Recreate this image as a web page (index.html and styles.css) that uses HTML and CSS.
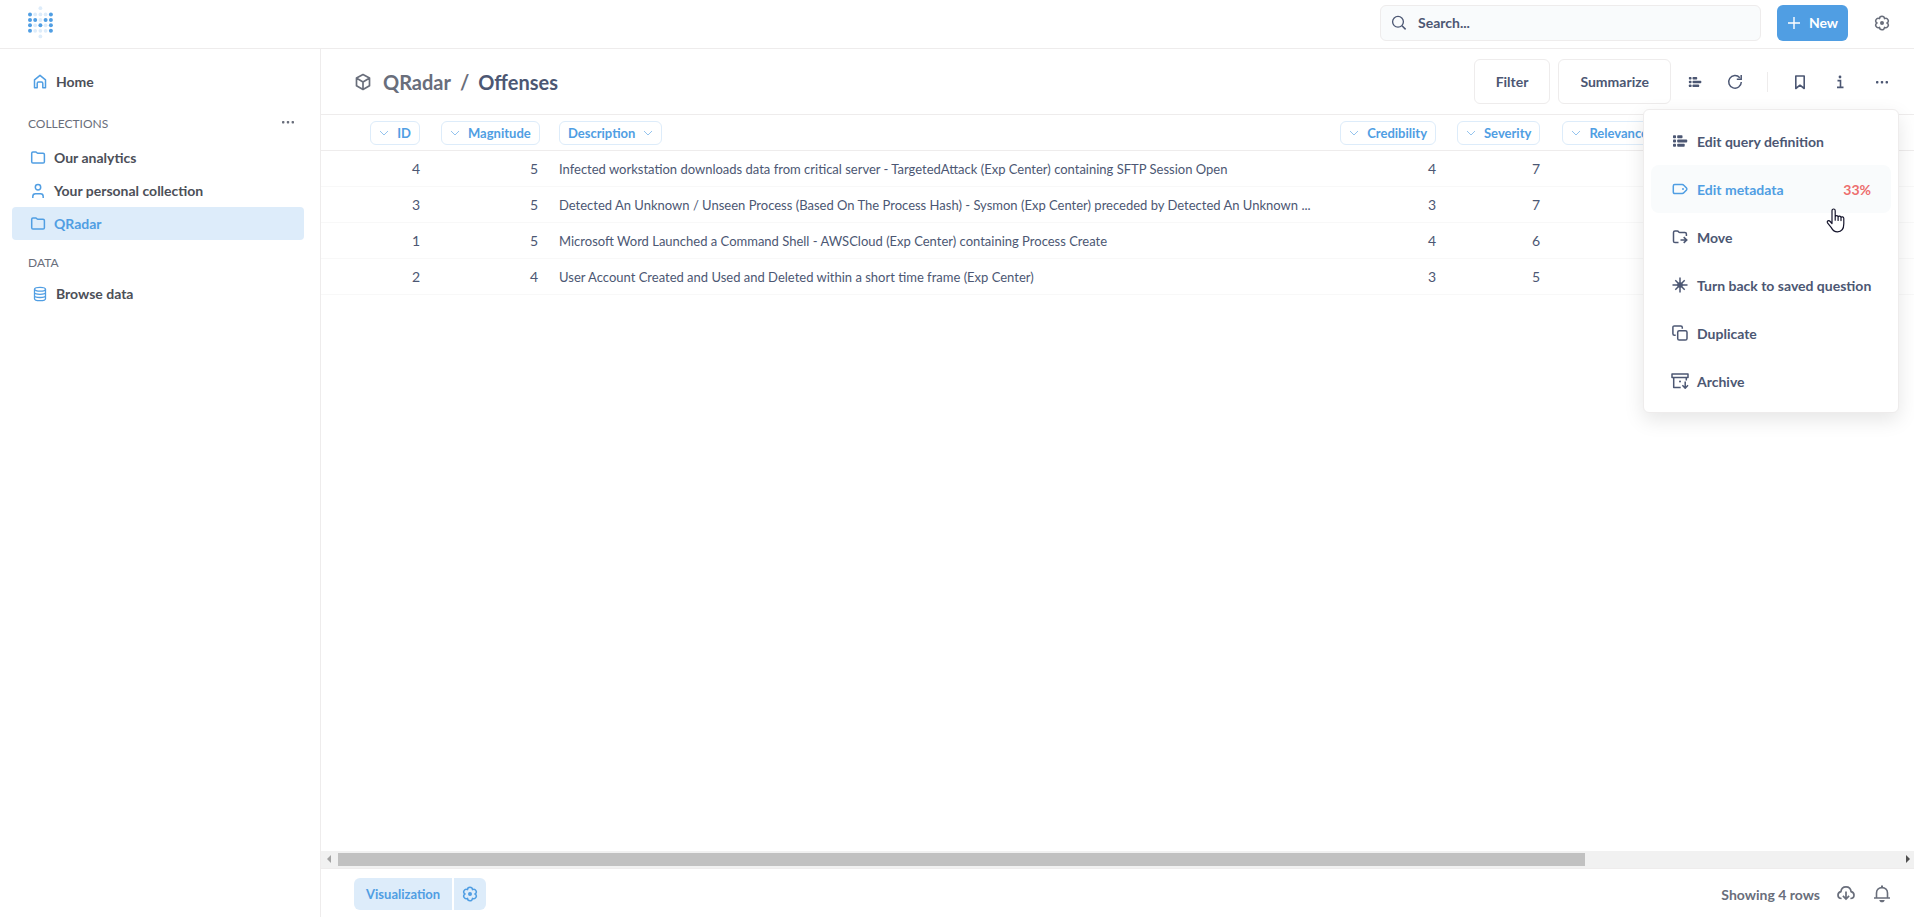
FILE: index.html
```html
<!DOCTYPE html>
<html lang="en">
<head>
<meta charset="utf-8">
<title>Offenses · Metabase</title>
<link rel="stylesheet" href="styles.css">
</head>
<body>
<svg class="sprite" aria-hidden="true">
  <symbol id="gear" viewBox="0 0 16 16"><path d="M13 8A2.500 2.500 0 0 1 10.500 12.330A2.500 2.500 0 0 1 5.500 12.330A2.500 2.500 0 0 1 3 8A2.500 2.500 0 0 1 5.500 3.670A2.500 2.500 0 0 1 10.500 3.670A2.500 2.500 0 0 1 13 8z" fill="none" stroke="currentColor" stroke-width="1.500" stroke-linejoin="round"/><circle cx="8" cy="8" r="2" fill="currentColor"/></symbol>
  <symbol id="folder" viewBox="0 0 16 16"><path d="M1.700 3.200c0-.8.4-1.200 1.200-1.200h2.800c.6 0 .8.200 1.100.6.300.5.500.7 1.100.7h5.200c.9 0 1.300.4 1.300 1.200v7.300c0 .9-.4 1.300-1.300 1.300H2.900c-.8 0-1.200-.4-1.200-1.300z" fill="none" stroke="currentColor" stroke-width="1.500"/></symbol>
  <symbol id="chevron" viewBox="0 0 10 10"><path d="M1 3l4 4 4-4" fill="none" stroke="currentColor" stroke-width="1"/></symbol>
  <symbol id="notebook" viewBox="0 0 16 16"><g fill="currentColor"><rect x="1" y="2.200" width="3" height="3" rx=".8"/><rect x="1" y="6.500" width="3" height="3" rx=".8"/><rect x="1" y="10.800" width="3" height="3" rx=".8"/><rect x="5.200" y="2.200" width="5.300" height="3" rx=".8"/><rect x="5.200" y="6.500" width="10" height="3" rx=".8"/><rect x="5.200" y="10.800" width="7.500" height="3" rx=".8"/></g></symbol>
  <symbol id="dots" viewBox="0 0 16 16"><g fill="currentColor"><rect x="2" y="7" width="2.400" height="2.400" rx=".7"/><rect x="6.800" y="7" width="2.400" height="2.400" rx=".7"/><rect x="11.600" y="7" width="2.400" height="2.400" rx=".7"/></g></symbol>
</svg>

<header class="topbar">
  <a href="#" class="logo" aria-label="Metabase home">
    <svg width="26" height="34" viewBox="0 0 26 34">
      <g class="dot-light"><circle cx="12.400" cy="2.200" r="1.900"/><circle cx="7.200" cy="8.400" r="1.900"/><circle cx="12.400" cy="8.400" r="1.900"/><circle cx="17.600" cy="8.400" r="1.900"/><circle cx="12.400" cy="14" r="1.900"/><circle cx="7.200" cy="19.300" r="1.900"/><circle cx="17.600" cy="19.300" r="1.900"/><circle cx="7.200" cy="24.800" r="1.900"/><circle cx="12.400" cy="24.800" r="1.900"/><circle cx="17.600" cy="24.800" r="1.900"/><circle cx="12.400" cy="30.400" r="1.900"/></g>
      <g class="dot-dark"><circle cx="2" cy="8.400" r="2"/><circle cx="22.900" cy="8.400" r="2"/><circle cx="2" cy="14" r="2"/><circle cx="7.200" cy="14" r="2"/><circle cx="17.600" cy="14" r="2"/><circle cx="22.900" cy="14" r="2"/><circle cx="2" cy="19.300" r="2"/><circle cx="12.400" cy="19.300" r="2"/><circle cx="22.900" cy="19.300" r="2"/><circle cx="2" cy="24.800" r="2"/><circle cx="22.900" cy="24.800" r="2"/></g>
    </svg>
  </a>
  <label class="search">
    <svg width="16" height="16" viewBox="0 0 16 16"><circle cx="7" cy="6.800" r="5.400" fill="none" stroke="currentColor" stroke-width="1.300"/><path d="M11 10.800l3.600 3.600" stroke="currentColor" stroke-width="1.500"/></svg>
    <input type="search" placeholder="Search..." aria-label="Search">
  </label>
  <button class="new-button" type="button"><svg width="14" height="14" viewBox="0 0 14 14"><path d="M7 1v12M1 7h12" stroke="currentColor" stroke-width="1.400"/></svg>New</button>
  <button class="icon-button top-gear" type="button" aria-label="Settings"><svg width="16" height="16"><use href="#gear"/></svg></button>
</header>

<div class="shell">
  <nav class="sidebar">
    <a href="#" class="nav-link nav-wide"><svg width="16" height="16" viewBox="0 0 16 16"><path d="M2.500 5.800L8 1.300l5.500 4.500v7.900h-2.700V9.500c0-.9-.5-1.400-1.300-1.400h-3c-.8 0-1.300.5-1.300 1.400v4.200H2.500z" fill="none" stroke="currentColor" stroke-width="1.500" stroke-linejoin="round"/></svg>Home</a>
    <div class="nav-heading"><h2>Collections</h2><button class="icon-button" type="button" aria-label="Collection options"><svg width="16" height="16"><use href="#dots"/></svg></button></div>
    <a href="#" class="nav-link"><svg width="16" height="16"><use href="#folder"/></svg>Our analytics</a>
    <a href="#" class="nav-link"><svg width="16" height="16" viewBox="0 0 16 16"><circle cx="8" cy="4.200" r="2.700" fill="none" stroke="currentColor" stroke-width="1.500"/><path d="M2.800 15v-1.600c0-1.700 1-2.700 2.700-2.700h5c1.700 0 2.700 1 2.700 2.700V15" fill="none" stroke="currentColor" stroke-width="1.500"/></svg>Your personal collection</a>
    <a href="#" class="nav-link active" aria-current="page"><svg width="16" height="16"><use href="#folder"/></svg>QRadar</a>
    <div class="nav-heading nav-data"><h2>Data</h2></div>
    <a href="#" class="nav-link nav-wide"><svg width="16" height="16" viewBox="0 0 16 16"><g fill="none" stroke="currentColor" stroke-width="1.300"><ellipse cx="8" cy="3.200" rx="5.500" ry="1.900"/><path d="M2.500 3.200v9.600c0 1 2.500 1.900 5.500 1.900s5.500-.9 5.500-1.900V3.200M2.500 6.500c0 1 2.500 1.800 5.500 1.800s5.500-.8 5.500-1.800M2.500 9.700c0 1 2.500 1.800 5.500 1.800s5.500-.8 5.500-1.800"/></g></svg>Browse data</a>
  </nav>

  <main class="main">
    <div class="title-bar">
      <svg class="model-icon" width="18" height="18" viewBox="0 0 18 18"><path d="M9 1.500l6.500 3.600v7.700L9 16.500l-6.500-3.700V5.100zM2.800 5.300L9 8.900l6.200-3.600M9 8.900v7.300" fill="none" stroke="currentColor" stroke-width="1.700" stroke-linejoin="round"/></svg>
      <h1><a href="#">QRadar</a><span class="slash">/</span><span class="name">Offenses</span></h1>
      <div class="actions">
        <button class="outline-button" type="button">Filter</button>
        <button class="outline-button" type="button">Summarize</button>
        <button class="icon-button" type="button" aria-label="Show editor"><svg width="14" height="14"><use href="#notebook"/></svg></button>
        <button class="icon-button" type="button" aria-label="Refresh"><svg width="16" height="16" viewBox="0 0 16 16"><path d="M12.800 3.800A6.300 6.300 0 1 0 14.300 8" fill="none" stroke="currentColor" stroke-width="1.500"/><path d="M14.200.9v4.400H9.800" fill="none" stroke="currentColor" stroke-width="1.500"/></svg></button>
        <span class="divider"></span>
        <button class="icon-button" type="button" aria-label="Bookmark"><svg width="16" height="16" viewBox="0 0 16 16"><path d="M3.800 2h8.400v12.500L8 11.200l-4.200 3.300z" fill="none" stroke="currentColor" stroke-width="1.600" stroke-linejoin="round"/></svg></button>
        <button class="icon-button" type="button" aria-label="Info"><svg width="16" height="16" viewBox="0 0 16 16"><circle cx="8" cy="3" r="1.400" fill="currentColor"/><path d="M5.500 6.600h3v6.600M5 13.400h6.500" fill="none" stroke="currentColor" stroke-width="1.600"/></svg></button>
        <button class="icon-button more-button" type="button" aria-label="More"><svg width="16" height="16"><use href="#dots"/></svg></button>
        <div class="menu" role="menu">
          <button type="button" role="menuitem"><svg width="16" height="16"><use href="#notebook"/></svg>Edit query definition</button>
          <button type="button" role="menuitem" class="hovered"><svg width="16" height="16" viewBox="0 0 16 16"><path d="M2.700 3.500h7.500c.7 0 1.200.2 1.600.7L14.500 7c.5.600.5 1.400 0 2l-2.700 2.800c-.4.500-.9.700-1.600.7H2.700c-.9 0-1.400-.5-1.400-1.400V4.900c0-.9.500-1.400 1.400-1.400z" fill="none" stroke="currentColor" stroke-width="1.500"/><circle cx="11" cy="8" r="1" fill="currentColor"/></svg>Edit metadata<span class="percent">33%</span></button>
          <button type="button" role="menuitem"><svg width="16" height="16" viewBox="0 0 16 16"><path d="M6.500 13.500H3c-.9 0-1.500-.4-1.500-1.300V3.500C1.500 2.600 2 2 3 2h2.300c.7 0 1 .3 1.300.8.300.5.600.8 1.300.8h5c1 0 1.500.5 1.500 1.400v2" fill="none" stroke="currentColor" stroke-width="1.500"/><path d="M8.500 11h6M11.700 8.200l3 2.800-3 2.800" fill="none" stroke="currentColor" stroke-width="1.600"/></svg>Move</button>
          <button type="button" role="menuitem"><svg width="16" height="16" viewBox="0 0 16 16"><path d="M8 .5v15M.5 8h15M3.300 3.300l9.400 9.400M12.700 3.300l-9.400 9.400" stroke="currentColor" stroke-width="1.500"/><circle cx="8" cy="8" r="2.800" fill="currentColor"/></svg>Turn back to saved question</button>
          <button type="button" role="menuitem"><svg width="16" height="16" viewBox="0 0 16 16"><rect x="5.700" y="5.700" width="9.300" height="9.300" rx="1.600" fill="none" stroke="currentColor" stroke-width="1.500"/><path d="M3.700 10.300H2.400c-.9 0-1.500-.5-1.500-1.500V2.400C.9 1.500 1.400.9 2.400.9h6.400c1 0 1.500.6 1.500 1.500v1.300" fill="none" stroke="currentColor" stroke-width="1.500"/></svg>Duplicate</button>
          <button type="button" role="menuitem"><svg width="18" height="16" viewBox="0 0 18 16"><path d="M1 1h16v3.400H1zM2.700 4.500v9.900h7M15.300 4.500v3" fill="none" stroke="currentColor" stroke-width="1.500" stroke-linejoin="round"/><path d="M14.200 8.500v6.300M11.400 12.300l2.800 2.900 2.800-2.900" fill="none" stroke="currentColor" stroke-width="1.500"/><circle cx="9" cy="8.500" r="1" fill="currentColor"/></svg>Archive</button>
          <svg class="cursor" width="20" height="26" viewBox="0 0 20 26"><path d="M6 2.800C6 .4 9.200.4 9.200 2.800v6c.2-1.500 2.700-1.500 2.900.2.400-1.300 2.700-1.200 2.900.6.500-1.200 2.800-.9 2.800 1v5.200c0 4.700-2.200 8-6.300 8-3 0-4.700-1.300-6.200-4.200L1.500 14.800c-1-1.800 1.300-2.900 2.700-1.300L6 15.500zM9.200 8.800v3.400M12.100 9v3.400M15 9.700v2.900" fill="#fff" stroke="#14142b" stroke-width="1.200" stroke-linecap="round" stroke-linejoin="round"/></svg>
        </div>
      </div>
    </div>

    <div class="grid-scroll">
      <table class="grid">
        <colgroup><col class="c-gutter"><col class="c-id"><col class="c-mag"><col class="c-desc"><col class="c-cred"><col class="c-sev"><col class="c-rel"><col class="c-rest"></colgroup>
        <thead><tr>
          <th></th>
          <th class="num"><button type="button"><svg width="10" height="10"><use href="#chevron"/></svg>ID</button></th>
          <th class="num"><button type="button"><svg width="10" height="10"><use href="#chevron"/></svg>Magnitude</button></th>
          <th><button type="button">Description<svg width="10" height="10"><use href="#chevron"/></svg></button></th>
          <th class="num"><button type="button"><svg width="10" height="10"><use href="#chevron"/></svg>Credibility</button></th>
          <th class="num"><button type="button"><svg width="10" height="10"><use href="#chevron"/></svg>Severity</button></th>
          <th class="num"><button type="button"><svg width="10" height="10"><use href="#chevron"/></svg>Relevance</button></th>
          <th></th>
        </tr></thead>
        <tbody>
          <tr><td></td><td class="num">4</td><td class="num">5</td><td>Infected workstation downloads data from critical server - TargetedAttack (Exp Center) containing SFTP Session Open</td><td class="num">4</td><td class="num">7</td><td></td><td></td></tr>
          <tr><td></td><td class="num">3</td><td class="num">5</td><td>Detected An Unknown / Unseen Process (Based On The Process Hash) - Sysmon (Exp Center) preceded by Detected An Unknown ...</td><td class="num">3</td><td class="num">7</td><td></td><td></td></tr>
          <tr><td></td><td class="num">1</td><td class="num">5</td><td>Microsoft Word Launched a Command Shell - AWSCloud (Exp Center) containing Process Create</td><td class="num">4</td><td class="num">6</td><td></td><td></td></tr>
          <tr><td></td><td class="num">2</td><td class="num">4</td><td>User Account Created and Used and Deleted within a short time frame (Exp Center)</td><td class="num">3</td><td class="num">5</td><td></td><td></td></tr>
        </tbody>
      </table>
    </div>

    <div class="scrollbar" aria-hidden="true">
      <svg class="arrow arrow-left" width="17" height="17" viewBox="0 0 17 17"><path d="M10 4v8L6 8z" fill="currentColor"/></svg>
      <div class="track"><div class="thumb"></div></div>
      <svg class="arrow" width="17" height="17" viewBox="0 0 17 17"><path d="M9 4v8l4-4z" fill="currentColor"/></svg>
    </div>

    <footer class="footer">
      <button class="viz-button viz-main" type="button">Visualization</button>
      <button class="viz-button viz-gear" type="button" aria-label="Visualization settings"><svg width="16" height="16"><use href="#gear"/></svg></button>
      <span class="row-count">Showing 4 rows</span>
      <button class="icon-button" type="button" aria-label="Download"><svg width="18" height="18" viewBox="0 0 18 18"><path d="M4.600 13.500C2.500 13.500 1 12 1 10c0-1.800 1.200-3 2.900-3.400C4.200 3.800 6.300 1.800 9 1.800s4.800 2 5.100 4.800C15.800 7 17 8.200 17 10c0 2-1.500 3.500-3.600 3.500" fill="none" stroke="currentColor" stroke-width="1.700"/><path d="M9 6.500v7.200M5.900 10.900L9 14l3.100-3.100" fill="none" stroke="currentColor" stroke-width="1.700"/></svg></button>
      <button class="icon-button" type="button" aria-label="Alerts"><svg width="18" height="18" viewBox="0 0 18 18"><path d="M1 13h16M3.500 12.800V8c0-3.200 2.200-5.400 5.500-5.400s5.500 2.200 5.500 5.400v4.800" fill="none" stroke="currentColor" stroke-width="1.600"/><path d="M9 .6v2" stroke="currentColor" stroke-width="2"/><path d="M6.300 15h5.400c-.2 1.500-1.200 2.300-2.700 2.300S6.500 16.500 6.300 15z" fill="currentColor"/></svg></button>
    </footer>
  </main>
</div>
</body>
</html>
```

FILE: styles.css
```css
* { box-sizing: border-box; }

:root {
  --brand: #509ee3;
  --brand-light: #ddecfa;
  --text: #4c5773;
  --text-medium: #696e7b;
  --border: #eeecec;
}

body {
  margin: 0;
  height: 100vh;
  display: flex;
  flex-direction: column;
  overflow: hidden;
  font-family: Lato, sans-serif;
  font-size: 14px;
  font-weight: 700;
  color: var(--text);
  background: #fff;
}

button, input { font: inherit; color: inherit; }
button { border: 0; background: none; padding: 0; cursor: pointer; }
a { color: inherit; text-decoration: none; }
h1, h2 { margin: 0; }
svg { display: block; flex: none; }
.sprite { position: absolute; width: 0; height: 0; }

.icon-button {
  display: flex;
  align-items: center;
  justify-content: center;
  width: 32px;
  height: 32px;
}

/* Top bar */
.topbar {
  flex: none;
  height: 49px;
  display: flex;
  align-items: center;
  padding: 0 16px 3px 28px;
  border-bottom: 1px solid var(--border);
}
.logo { margin-right: auto; }
.dot-light { fill: var(--brand-light); }
.dot-dark { fill: var(--brand); }
.search {
  width: 381px;
  height: 36px;
  display: flex;
  align-items: center;
  gap: 11px;
  padding: 0 10px;
  border: 1px solid var(--border);
  border-radius: 6px;
  background: #f9fbfc;
}
.search input { flex: 1; min-width: 0; border: 0; padding: 0; outline: 0; background: none; }
.search input::placeholder { color: #4c5773; opacity: 1; }
.new-button {
  width: 71px;
  height: 36px;
  margin-left: 16px;
  display: flex;
  align-items: center;
  justify-content: center;
  gap: 8px;
  border-radius: 6px;
  color: #fff;
  background: var(--brand);
}
.top-gear { margin-left: 18px; color: var(--text-medium); }

.shell { flex: 1; min-height: 0; display: flex; }

/* Sidebar */
.sidebar {
  flex: none;
  width: 321px;
  padding: 16px 16px 0 12px;
  border-right: 1px solid var(--border);
}
.nav-link {
  display: flex;
  align-items: center;
  gap: 8px;
  height: 33px;
  padding-left: 18px;
  border-radius: 4px;
  color: #4c4f58;
}
.nav-link svg { color: var(--brand); }
.nav-wide { padding-left: 20px; }
.nav-link.active { background: var(--brand-light); color: var(--brand); }
.nav-heading {
  display: flex;
  justify-content: space-between;
  height: 43px;
  padding: 8px 0 0 16px;
}
.nav-heading h2 {
  padding-top: 10px;
  font-size: 12px;
  line-height: 16px;
  font-weight: 400;
  text-transform: uppercase;
  color: var(--text-medium);
}
.nav-heading .icon-button { color: var(--text-medium); }
.nav-data { height: 37px; padding-top: 5px; }

/* Main area */
.main { flex: 1; min-width: 0; display: flex; flex-direction: column; }
.title-bar {
  flex: none;
  height: 66px;
  display: flex;
  align-items: center;
  padding: 0 16px 0 33px;
  border-bottom: 1px solid var(--border);
}
.model-icon { color: var(--text-medium); }
.title-bar h1 { margin-left: 11px; font-size: 20px; line-height: 24px; color: var(--text-medium); }
.slash { margin: 0 9px; }
.name { color: var(--text); }
.actions { position: relative; margin-left: auto; display: flex; align-items: center; gap: 8px; }
.outline-button {
  height: 45px;
  padding: 0 21px;
  border: 1px solid var(--border);
  border-radius: 6px;
}
.divider { width: 1px; height: 20px; margin: 0 8px; background: var(--border); }
.more-button { margin-left: 2px; }

.menu {
  position: absolute;
  z-index: 2;
  top: 50px;
  right: -1px;
  width: 256px;
  padding: 7px;
  border: 1px solid var(--border);
  border-radius: 6px;
  background: #fff;
  box-shadow: 0 7px 20px rgba(0, 0, 0, 0.1);
}
.menu button {
  width: 100%;
  height: 48px;
  display: flex;
  align-items: center;
  gap: 8px;
  padding: 0 20px;
  border-radius: 8px;
  white-space: nowrap;
}
.menu button svg { width: 18px; }
.menu .hovered { background: #f9fbfc; color: var(--brand); }
.percent { margin-left: auto; color: #ed6e6e; }
.cursor { position: absolute; left: 182px; top: 98px; }

/* Data grid */
.grid-scroll { flex: 1; min-height: 0; overflow: hidden; }
.grid {
  width: 100%;
  table-layout: fixed;
  border-collapse: separate;
  border-spacing: 0;
  font-size: 13px;
}
.c-gutter { width: 38px; }
.c-id { width: 71px; }
.c-mag { width: 118px; }
.c-desc { width: 780px; }
.c-cred { width: 118px; }
.c-sev { width: 104px; }
.c-rel { width: 117px; }
.grid th, .grid td { height: 36px; padding: 0 10px 0 11px; text-align: left; white-space: nowrap; }
.grid th { border-bottom: 1px solid var(--border); }
.grid td { border-bottom: 1px solid #f8f8f8; font-weight: 400; }
.grid .num { text-align: right; }
.grid td.num { font-size: 14px; }
.grid th button {
  display: inline-flex;
  align-items: center;
  gap: 8px;
  height: 24px;
  padding: 0 8px;
  border: 1px solid var(--brand-light);
  border-radius: 6px;
  vertical-align: middle;
  color: var(--brand);
}
.grid th svg { opacity: 0.6; }

/* Horizontal scroll bar */
.scrollbar { flex: none; height: 18px; display: flex; align-items: center; background: #f1f1f1; border-bottom: 1px solid var(--border); color: #505050; }
.arrow-left { color: #a3a3a3; }
.track { flex: 1; }
.thumb { width: 80%; height: 13px; background: #c1c1c1; }

/* Footer */
.footer {
  flex: none;
  height: 48px;
  display: flex;
  align-items: center;
  padding: 2px 16px 0 33px;
  color: var(--text-medium);
}
.viz-button { height: 32px; background: var(--brand-light); color: var(--brand); }
.viz-main { padding: 0 12px; border-radius: 6px 0 0 6px; font-size: 13px; }
.viz-gear { width: 32px; margin-left: 2px; display: flex; align-items: center; justify-content: center; border-radius: 0 6px 6px 0; }
.row-count { margin-left: auto; padding-right: 10px; }
.footer .icon-button + .icon-button { margin-left: 4px; }
```
